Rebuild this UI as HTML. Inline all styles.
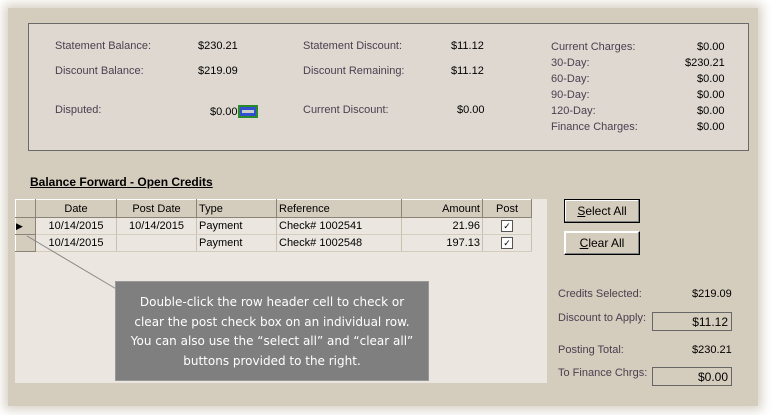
<!DOCTYPE html>
<html><head><style>
body{margin:0;width:772px;height:415px;background:#fff;position:relative;overflow:hidden;font-family:"Liberation Sans",sans-serif;font-size:11px;}
.a{position:absolute;white-space:nowrap}
.l{color:#4a4050}
.v{color:#000;text-align:right}
#bg{position:absolute;left:8px;top:8px;width:750px;height:398px;background:#d4ccbc;box-shadow:0 0 10px 4px #d8d2c6;}
#box{position:absolute;left:28px;top:23px;width:719px;height:126px;background:#ded8d1;border:1px solid #6a6a6a;}
#grid{position:absolute;left:15px;top:199px;width:532px;height:184px;background:#ebe7e0;}
table{position:absolute;left:15px;top:199px;border-collapse:collapse;font-size:11px;table-layout:fixed;width:516px}
td{height:16px;padding:0 2px;border:1px solid #fff;border-right:1px solid #c8c0b0;border-bottom:1px solid #d4ccbc;overflow:hidden;white-space:nowrap}
tr.h td{background:#d4ccbc;border:1px solid #fff;border-right-color:#8a8478;border-bottom-color:#8a8478;height:17px}
tr.r td{background:#ebe7e0}
td.rh{background:#d4ccbc!important;padding:0;border-right-color:#8a8478;border-bottom-color:#8a8478}
.cb{display:inline-block;width:10px;height:10px;border:1px solid #555;background:#fff;font-size:9px;line-height:10px;text-align:center}
.btn{position:absolute;background:#d4ccbc;border:1px solid #000;box-shadow:inset -1px -1px #808080,inset 1px 1px #fff;text-align:center;font-size:12px;line-height:22px}
.in{position:absolute;border:1px solid #666;text-align:right;padding-right:3px;line-height:18px;box-sizing:border-box;font-size:12px}
#tip{position:absolute;left:115px;top:281px;width:314px;height:100px;background:#7f7f7f;color:#fff;font-family:"DejaVu Sans",sans-serif;font-size:12px;text-align:center;line-height:19.5px;box-sizing:border-box;padding-top:11px;border:1px solid #999}
</style></head><body>
<div id="bg"></div>
<div id="box"></div>
<div class="a l" style="left:55px;top:40px">Statement Balance:</div>
<div class="a v" style="left:198px;top:40px">$230.21</div>
<div class="a l" style="left:55px;top:65px">Discount Balance:</div>
<div class="a v" style="left:198px;top:65px">$219.09</div>
<div class="a l" style="left:55px;top:104px">Disputed:</div>
<div class="a v" style="left:210px;top:106px">$0.00</div>
<div class="a" style="left:238px;top:105px;width:20px;height:13px;background:#2a8a2a;"><div style="margin:2px;height:9px;background:#3050d0;"><div style="margin:0 2px;position:relative;top:3px;height:3px;background:#ccc"></div></div></div>
<div class="a l" style="left:303px;top:40px">Statement Discount:</div>
<div class="a v" style="left:451px;top:40px">$11.12</div>
<div class="a l" style="left:303px;top:65px">Discount Remaining:</div>
<div class="a v" style="left:451px;top:65px">$11.12</div>
<div class="a l" style="left:303px;top:104px">Current Discount:</div>
<div class="a v" style="left:457px;top:104px">$0.00</div>
<div class="a l" style="left:551px;top:41px">Current Charges:</div><div class="a v" style="left:697px;top:41px">$0.00</div>
<div class="a l" style="left:551px;top:57px">30-Day:</div><div class="a v" style="left:685px;top:57px">$230.21</div>
<div class="a l" style="left:551px;top:73px">60-Day:</div><div class="a v" style="left:697px;top:73px">$0.00</div>
<div class="a l" style="left:551px;top:89px">90-Day:</div><div class="a v" style="left:697px;top:89px">$0.00</div>
<div class="a l" style="left:551px;top:105px">120-Day:</div><div class="a v" style="left:697px;top:105px">$0.00</div>
<div class="a l" style="left:551px;top:121px">Finance Charges:</div><div class="a v" style="left:697px;top:121px">$0.00</div>
<div class="a" style="left:30px;top:175px;font-weight:bold;text-decoration:underline;font-size:12px">Balance Forward - Open Credits</div>
<div id="grid"></div>
<table>
<colgroup><col style="width:20px"><col style="width:81px"><col style="width:80px"><col style="width:80px"><col style="width:125px"><col style="width:81px"><col style="width:49px"></colgroup>
<tr class="h"><td class="rh"></td><td style="text-align:center">Date</td><td style="text-align:center">Post Date</td><td>Type</td><td>Reference</td><td style="text-align:right">Amount</td><td style="text-align:center">Post</td></tr>
<tr class="r"><td class="rh" style="font-size:9px">&#9654;</td><td style="text-align:center">10/14/2015</td><td style="text-align:center">10/14/2015</td><td>Payment</td><td>Check# 1002541</td><td style="text-align:right">21.96</td><td style="text-align:center"><span class="cb">&#10003;</span></td></tr>
<tr class="r"><td class="rh"></td><td style="text-align:center">10/14/2015</td><td></td><td>Payment</td><td>Check# 1002548</td><td style="text-align:right">197.13</td><td style="text-align:center"><span class="cb">&#10003;</span></td></tr>
</table>
<svg class="a" style="left:0;top:0" width="772" height="415"><line x1="27" y1="236" x2="118" y2="290" stroke="#888" stroke-width="1"/></svg>
<div id="tip">Double-click the row header cell to check or<br>clear the post check box on an individual row.<br>You can also use the “select all” and “clear all”<br>buttons provided to the right.</div>
<div class="btn" style="left:564px;top:199px;width:74px;height:22px"><u>S</u>elect All</div>
<div class="btn" style="left:564px;top:231px;width:74px;height:22px;border-color:#fff #000 #000 #fff"><u>C</u>lear All</div>
<div class="a l" style="left:558px;top:288px">Credits Selected:</div><div class="a v" style="left:692px;top:288px">$219.09</div>
<div class="a l" style="left:558px;top:312px">Discount to Apply:</div><div class="in" style="left:652px;top:312px;width:80px;height:19px">$11.12</div>
<div class="a l" style="left:558px;top:344px">Posting Total:</div><div class="a v" style="left:692px;top:344px">$230.21</div>
<div class="a l" style="left:558px;top:367px">To Finance Chrgs:</div><div class="in" style="left:652px;top:367px;width:80px;height:19px">$0.00</div>
</body></html>
